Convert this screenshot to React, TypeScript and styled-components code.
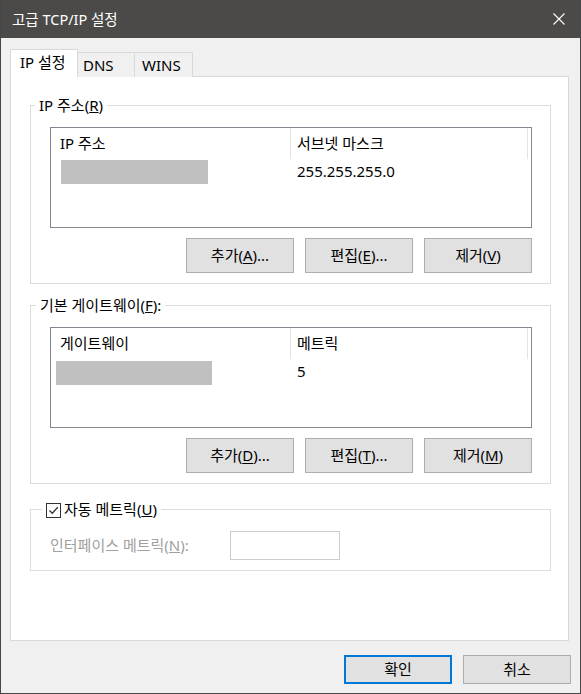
import styled, { createGlobalStyle } from 'styled-components';

const GlobalStyle = createGlobalStyle`
  html, body {
    margin: 0;
    padding: 0;
    background: #ffffff;
  }
  body {
    font-family: "Noto Sans", "Noto Sans CJK KR", sans-serif;
  }
  * {
    box-sizing: border-box;
  }
`;

const Window = styled.div`
  width: 581px;
  height: 694px;
  border: 1px solid #474747;
  border-top: none;
  background: #f0f0f0;
  display: flex;
  flex-direction: column;
  font-size: 15px;
  color: #000;
`;

const TitleBar = styled.div`
  height: 38px;
  background: #4b4a48;
  display: flex;
  align-items: center;
  justify-content: space-between;
  padding-left: 11px;
  color: #fff;
  font-size: 14.5px;
  line-height: 20px;
`;

const CloseButton = styled.div`
  width: 42px;
  height: 38px;
  display: flex;
  align-items: center;
  justify-content: center;
`;

const Body = styled.div`
  flex: 1;
  display: flex;
  flex-direction: column;
  padding: 11px 11px 9px 9px;
`;

const TabStrip = styled.div`
  display: flex;
  align-items: flex-end;
  height: 28px;
  margin-bottom: -1px;
`;

const Tab = styled.div<{ $active?: boolean; $width: number; $pad: number }>`
  width: ${(p) => p.$width}px;
  height: ${(p) => (p.$active ? 28 : 25)}px;
  padding-left: ${(p) => p.$pad}px;
  padding-bottom: ${(p) => (p.$active ? 4 : 1)}px;
  display: flex;
  align-items: center;
  background: ${(p) => (p.$active ? '#ffffff' : '#f0f0f0')};
  border: 1px solid #d9d9d9;
  border-bottom: none;
  position: relative;
  z-index: ${(p) => (p.$active ? 1 : 0)};
  line-height: 18px;
  white-space: nowrap;
  & + & {
    margin-left: -1px;
  }
`;

const Panel = styled.div`
  height: 565px;
  background: #ffffff;
  border: 1px solid #d9d9d9;
  padding: 28px 17px 0 19px;
  display: flex;
  flex-direction: column;
`;

const GroupBox = styled.div<{ $gap?: number }>`
  margin-top: ${(p) => p.$gap ?? 0}px;
  border: 1px solid #dcdcdc;
  padding: 0 18px 10px 19px;
`;

const GroupTitle = styled.div<{ $shift: number }>`
  width: fit-content;
  height: 16px;
  margin: -8px 0 13px ${(p) => -p.$shift}px;
  padding: 0 4px 3px;
  background: #ffffff;
  display: flex;
  align-items: center;
  gap: 3px;
  line-height: 16px;
  white-space: nowrap;
`;

const CheckBox = styled.span`
  width: 15px;
  height: 15px;
  margin-top: 3px;
  border: 1px solid #333333;
  background: #ffffff;
  display: flex;
  align-items: center;
  justify-content: center;
`;

const ListBox = styled.div`
  height: 101px;
  border: 1px solid #828790;
  background: #ffffff;
`;

const ListHeader = styled.div`
  display: flex;
  height: 31px;
`;

const HeaderCell = styled.div<{ $width: number; $pad: number }>`
  width: ${(p) => p.$width}px;
  padding-left: ${(p) => p.$pad}px;
  padding-bottom: 2px;
  border-right: 1px solid #e5e5e5;
  display: flex;
  align-items: center;
  line-height: 18px;
`;

const ListRow = styled.div`
  display: flex;
  height: 25px;
  align-items: center;
`;

const Cell = styled.div<{ $width: number; $pad?: number }>`
  width: ${(p) => p.$width}px;
  padding-left: ${(p) => p.$pad ?? 0}px;
  height: 100%;
  display: flex;
  align-items: center;
  line-height: 18px;
`;

const CellText = styled.span`
  margin-top: -2px;
`;

const Redacted = styled.div<{ $left: number; $width: number; $top?: number }>`
  margin-left: ${(p) => p.$left}px;
  margin-top: ${(p) => p.$top ?? 0}px;
  width: ${(p) => p.$width}px;
  height: 24px;
  background: #c0c0c0;
`;

const ButtonRow = styled.div`
  display: flex;
  justify-content: flex-end;
  gap: 11px;
  margin-top: 10px;
`;

const Button = styled.div<{ $height?: number; $default?: boolean }>`
  width: 108px;
  height: ${(p) => p.$height ?? 35}px;
  padding-bottom: 1px;
  background: #e1e1e1;
  border: ${(p) => (p.$default ? '2px solid #0078d7' : '1px solid #adadad')};
  display: flex;
  align-items: center;
  justify-content: center;
  line-height: 18px;
  white-space: nowrap;
  u {
    text-underline-offset: 2px;
  }
`;

const FieldRow = styled.div`
  display: flex;
  align-items: center;
`;

const DisabledLabel = styled.div`
  width: 180px;
  margin-top: -2px;
  color: #a0a0a0;
  line-height: 18px;
  white-space: nowrap;
`;

const TextInput = styled.div`
  width: 110px;
  height: 29px;
  border: 1px solid #cccccc;
  background: #ffffff;
`;

const Footer = styled.div`
  display: flex;
  justify-content: flex-end;
  gap: 11px;
  margin-top: 14px;
  margin-right: -2px;
`;

function CloseIcon() {
  return (
    <svg width="12" height="12" viewBox="0 0 12 12">
      <path d="M0.5 0.5 L11.5 11.5 M11.5 0.5 L0.5 11.5" stroke="#ffffff" strokeWidth="1.1" fill="none" />
    </svg>
  );
}

function CheckMark() {
  return (
    <svg width="11" height="11" viewBox="0 0 11 11">
      <polyline points="1.5,5.5 4.3,8.3 9.8,2.2" stroke="#333333" strokeWidth="1.3" fill="none" />
    </svg>
  );
}

interface ListProps {
  col1: string;
  col2: string;
  value: string;
  bar: { left: number; width: number; top?: number };
}

function AddressList({ col1, col2, value, bar }: ListProps) {
  return (
    <ListBox>
      <ListHeader>
        <HeaderCell $width={240} $pad={9}>{col1}</HeaderCell>
        <HeaderCell $width={237} $pad={6}>{col2}</HeaderCell>
      </ListHeader>
      <ListRow>
        <Cell $width={240}>
          <Redacted $left={bar.left} $width={bar.width} $top={bar.top} />
        </Cell>
        <Cell $width={237} $pad={6}>
          <CellText>{value}</CellText>
        </Cell>
      </ListRow>
    </ListBox>
  );
}

export default function App() {
  return (
    <>
      <GlobalStyle />
      <Window>
        <TitleBar>
          <span>고급 TCP/IP 설정</span>
          <CloseButton>
            <CloseIcon />
          </CloseButton>
        </TitleBar>
        <Body>
          <TabStrip>
            <Tab $active $width={68} $pad={9}>IP 설정</Tab>
            <Tab $width={58} $pad={5}>DNS</Tab>
            <Tab $width={59} $pad={7}>WINS</Tab>
          </TabStrip>
          <Panel>
            <GroupBox>
              <GroupTitle $shift={15}>
                <span>IP 주소(<u>R</u>)</span>
              </GroupTitle>
              <AddressList
                col1="IP 주소"
                col2="서브넷 마스크"
                value="255.255.255.0"
                bar={{ left: 10, width: 147 }}
              />
              <ButtonRow>
                <Button>추가(<u>A</u>)...</Button>
                <Button>편집(<u>E</u>)...</Button>
                <Button>제거(<u>V</u>)</Button>
              </ButtonRow>
            </GroupBox>
            <GroupBox $gap={21}>
              <GroupTitle $shift={14}>
                <span>기본 게이트웨이(<u>F</u>):</span>
              </GroupTitle>
              <AddressList
                col1="게이트웨이"
                col2="메트릭"
                value="5"
                bar={{ left: 5, width: 156, top: 2 }}
              />
              <ButtonRow>
                <Button>추가(<u>D</u>)...</Button>
                <Button>편집(<u>T</u>)...</Button>
                <Button>제거(<u>M</u>)</Button>
              </ButtonRow>
            </GroupBox>
            <GroupBox $gap={25}>
              <GroupTitle $shift={8}>
                <CheckBox>
                  <CheckMark />
                </CheckBox>
                <span>자동 메트릭(<u>U</u>)</span>
              </GroupTitle>
              <FieldRow>
                <DisabledLabel>인터페이스 메트릭(<u>N</u>):</DisabledLabel>
                <TextInput />
              </FieldRow>
            </GroupBox>
          </Panel>
          <Footer>
            <Button $height={29} $default>확인</Button>
            <Button $height={29}>취소</Button>
          </Footer>
        </Body>
      </Window>
    </>
  );
}
